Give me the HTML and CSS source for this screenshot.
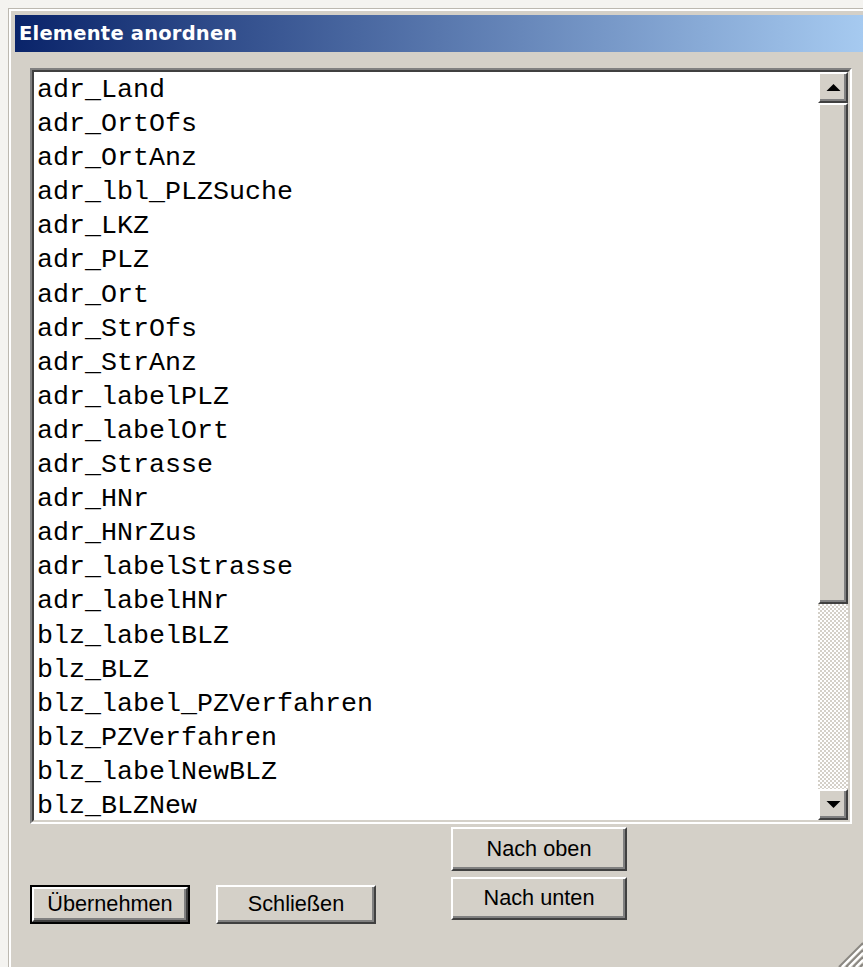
FILE: index.html
```html
<!DOCTYPE html>
<html lang="de">
<head>
<meta charset="utf-8">
<title>Elemente anordnen</title>
<link rel="stylesheet" href="styles.css">
</head>
<body>
<div class="window">
  <div class="titlebar"><span class="title">Elemente anordnen</span></div>
  <div class="client">
    <div class="listbox">
      <div class="listbox-inner">
        <ul class="items">
          <li>adr_Land</li>
          <li>adr_OrtOfs</li>
          <li>adr_OrtAnz</li>
          <li>adr_lbl_PLZSuche</li>
          <li>adr_LKZ</li>
          <li>adr_PLZ</li>
          <li>adr_Ort</li>
          <li>adr_StrOfs</li>
          <li>adr_StrAnz</li>
          <li>adr_labelPLZ</li>
          <li>adr_labelOrt</li>
          <li>adr_Strasse</li>
          <li>adr_HNr</li>
          <li>adr_HNrZus</li>
          <li>adr_labelStrasse</li>
          <li>adr_labelHNr</li>
          <li>blz_labelBLZ</li>
          <li>blz_BLZ</li>
          <li>blz_label_PZVerfahren</li>
          <li>blz_PZVerfahren</li>
          <li>blz_labelNewBLZ</li>
          <li>blz_BLZNew</li>
        </ul>
        <div class="vscroll">
          <div class="sb-btn raised">
            <svg width="16" height="8" viewBox="0 0 16 8"><polygon points="8,0 16,8 0,8" fill="#000"/></svg>
          </div>
          <div class="sb-thumb raised"></div>
          <div class="sb-track"></div>
          <div class="sb-btn raised">
            <svg width="16" height="8" viewBox="0 0 16 8"><polygon points="0,0 16,0 8,8" fill="#000"/></svg>
          </div>
        </div>
      </div>
    </div>

    <div class="actions">
      <div class="left-btns">
        <div class="default-frame"><button class="btn raised">Übernehmen</button></div>
        <button class="btn raised plain">Schließen</button>
      </div>
      <div class="order-btns">
        <button class="btn raised order up">Nach oben</button>
        <button class="btn raised order">Nach unten</button>
      </div>
    </div>

    <svg class="grip" width="28" height="30" viewBox="0 0 28 30">
      <g stroke-width="2.2">
        <line x1="4" y1="30" x2="28" y2="6" stroke="#8a8782"/>
        <line x1="7" y1="30" x2="28" y2="9" stroke="#ffffff"/>
        <line x1="11" y1="30" x2="28" y2="13" stroke="#8a8782"/>
        <line x1="14" y1="30" x2="28" y2="16" stroke="#ffffff"/>
        <line x1="18" y1="30" x2="28" y2="20" stroke="#8a8782"/>
        <line x1="21" y1="30" x2="28" y2="23" stroke="#ffffff"/>
        <line x1="25" y1="30" x2="28" y2="27" stroke="#8a8782"/>
      </g>
    </svg>
  </div>
</div>
</body>
</html>
```

FILE: styles.css
```css
html, body {
  margin: 0;
  padding: 0;
  background: #f4f3f0;
  overflow: hidden;
}

/* dialog frame */
.window {
  margin: 8px 0 0 8px;
  height: 959px;
  box-sizing: border-box;
  border-top: 1px solid #bcb8b0;
  border-left: 1px solid #bcb8b0;
  background: #d4d0c8;
  box-shadow: inset 2px 2px 0 #ffffff;
  padding: 6px 0 0 6px;
  display: flex;
  flex-direction: column;
}

.titlebar {
  height: 37px;
  background: linear-gradient(to right, #0a246a, #a6caf0);
  display: flex;
  align-items: center;
  padding-left: 4px;
}

.title {
  color: #ffffff;
  font-family: "DejaVu Sans", Tahoma, sans-serif;
  font-weight: bold;
  font-size: 19.5px;
  letter-spacing: 0.2px;
  line-height: 1;
  padding-top: 1px;
}

.client {
  position: relative;
  flex: 1;
}

/* sunken list box */
.listbox {
  margin: 16px 11px 0 15px;
  height: 756px;
  box-sizing: border-box;
  border: 2px solid;
  border-color: #808080 #ffffff #ffffff #808080;
}

.listbox-inner {
  height: 100%;
  box-sizing: border-box;
  border: 2px solid;
  border-color: #404040 #d4d0c8 #d4d0c8 #404040;
  background: #ffffff;
  display: flex;
}

.items {
  flex: 1;
  margin: 0;
  padding: 1px 0 0 3px;
  list-style: none;
  overflow: hidden;
  font-family: "Courier New", "Nimbus Mono PS", "FreeMono", "Liberation Mono", monospace;
  font-size: 26.67px;
  line-height: 34.1px;
  color: #000000;
}

.items li {
  white-space: pre;
}

/* classic 3D raised edge */
.raised {
  box-sizing: border-box;
  background: #d4d0c8;
  border: 2px solid;
  border-color: #ffffff #404040 #404040 #ffffff;
  box-shadow: inset -2px -2px 0 #808080;
}

.vscroll {
  width: 30px;
  display: flex;
  flex-direction: column;
}

.sb-btn {
  height: 31px;
  display: flex;
  align-items: center;
  justify-content: center;
}

.sb-btn svg {
  display: block;
  width: 15px;
  height: 7px;
}

.sb-thumb {
  height: 501px;
}

.sb-track {
  flex: 1;
  background: repeating-conic-gradient(#ffffff 0 25%, #d4d0c8 0 50%) 0 0 / 4px 4px;
}

/* buttons */
.actions {
  display: flex;
  margin: 3px 0 0 15px;
}

.left-btns {
  display: flex;
  gap: 26px;
  margin-top: 58px;
}

.btn {
  margin: 0;
  padding: 0 0 1px;
  font-family: "Liberation Sans", Arial, sans-serif;
  font-size: 21.7px;
  color: #000000;
  text-align: center;
}

.default-frame {
  width: 160px;
  height: 39px;
  box-sizing: border-box;
  border: 2px solid #000000;
}

.default-frame .btn {
  width: 156px;
  height: 35px;
  display: block;
}

.btn.plain {
  width: 160px;
  height: 39px;
}

.order-btns {
  display: flex;
  flex-direction: column;
  gap: 6px;
  margin-left: 75px;
}

.btn.order {
  width: 176px;
  height: 43px;
}

.btn.order.up {
  height: 44px;
}

.grip {
  position: absolute;
  right: 0;
  bottom: 0;
  display: block;
}
```
